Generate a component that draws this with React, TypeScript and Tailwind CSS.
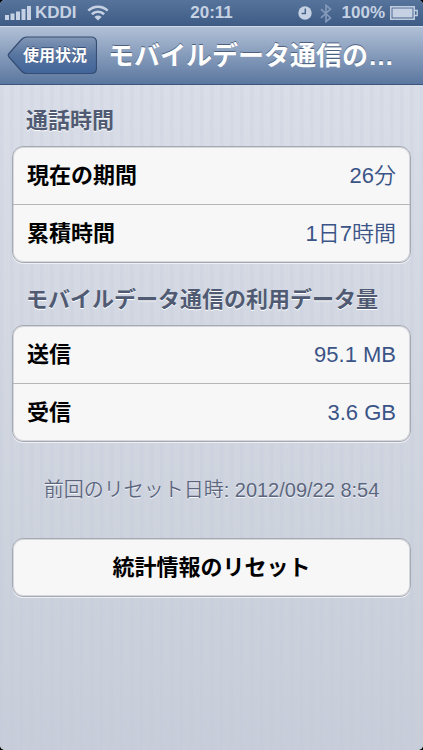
import React from 'react';

const callTime = [
  { label: '現在の期間', value: '26分' },
  { label: '累積時間', value: '1日7時間' },
];

const dataUsage = [
  { label: '送信', value: '95.1 MB' },
  { label: '受信', value: '3.6 GB' },
];

const StatusBar = () => {
  return (
    <div className="grid h-[26px] grid-cols-[1fr_auto_1fr] items-center bg-gradient-to-b from-[#56749b] to-[#3e5b85] px-[5px] text-[17px] leading-5 font-bold text-[#c6d2e3]">
      <div className="flex items-center gap-1">
        <svg width="26" height="14" viewBox="0 0 26 14" fill="currentColor" aria-hidden="true">
          <rect x="0" y="9" width="4" height="5" />
          <rect x="5.5" y="7.5" width="4" height="6.5" />
          <rect x="11" y="5.5" width="4" height="8.5" />
          <rect x="16.5" y="3" width="4" height="11" />
          <rect x="22" y="0" width="4" height="14" />
        </svg>
        <span>KDDI</span>
        <svg className="ml-1.5" width="22" height="16" viewBox="0 0 22 16" fill="none" stroke="currentColor" aria-hidden="true">
          <path d="M1.3 5.6a14 14 0 0 1 19.4 0" strokeWidth="2.6" />
          <path d="M4.9 9.2a8.8 8.8 0 0 1 12.2 0" strokeWidth="2.6" />
          <path d="M11 15.6 7.4 12a5.2 5.2 0 0 1 7.2 0z" fill="currentColor" stroke="none" />
        </svg>
      </div>
      <span>20:11</span>
      <div className="flex items-center justify-end">
        <svg width="14" height="14" viewBox="0 0 14 14" aria-hidden="true">
          <circle cx="7" cy="7" r="6.7" fill="currentColor" />
          <path d="M7.3 2.5v5H3.6" fill="none" stroke="#48658e" strokeWidth="1.5" />
        </svg>
        <svg className="ml-2 text-[#8299b9]" width="12" height="19" viewBox="0 0 12 19" fill="none" stroke="currentColor" strokeWidth="1.7" aria-hidden="true">
          <path d="M1 5.2 10.5 14 6 17.6V1.4L10.5 5 1 13.8" />
        </svg>
        <span className="ml-[10px]">100%</span>
        <svg className="ml-[5px]" width="28" height="14" viewBox="0 0 28 14" aria-hidden="true">
          <rect x="0.8" y="0.8" width="23.4" height="12.4" fill="none" stroke="currentColor" strokeWidth="1.5" />
          <rect x="2.5" y="2.5" width="20" height="9" fill="currentColor" />
          <path d="M24.5 4.5h2.7v5h-2.7" fill="none" stroke="currentColor" strokeWidth="1.3" />
        </svg>
      </div>
    </div>
  );
};

const NavBar = () => {
  return (
    <header className="flex h-[59px] items-center border-t border-b border-t-[#cfd9e7] border-b-[#3c557c] bg-gradient-to-b from-[#b1c0d6] to-[#5b779f] pr-3 pl-[7px]">
      <button type="button" className="relative h-[39px] w-[90px] shrink-0 pl-4 text-left text-[16px] leading-5 font-bold text-white">
        <svg className="absolute inset-0" width="90" height="39" viewBox="0 0 90 39" aria-hidden="true">
          <defs>
            <linearGradient id="back" x1="0" y1="0" x2="0" y2="1">
              <stop offset="0" stopColor="#8397b7" />
              <stop offset="0.5" stopColor="#56749f" />
              <stop offset="1" stopColor="#41659a" />
            </linearGradient>
          </defs>
          <path
            d="M20 1H84Q89.500 1 89.500 6.500V32Q89.500 37.500 84 37.500H20Q16.500 37.500 14 34.500L2 21Q0.500 19.300 2 17.500L14 4Q16.500 1 20 1Z"
            fill="url(#back)"
            stroke="#364d73"
            strokeWidth="1.2"
          />
        </svg>
        <span className="relative [text-shadow:0_-1px_0_#3a5077]">使用状況</span>
      </button>
      <h1 className="ml-[11px] min-w-0 flex-1 overflow-hidden text-[26px] leading-10 font-bold whitespace-nowrap text-white [text-shadow:0_-1px_0_#4d607e]">
        モバイルデータ通信の…
      </h1>
    </header>
  );
};

const Group = ({ title, rows }: { title: string; rows: { label: string; value: string }[] }) => {
  return (
    <section>
      <h2 className="px-[14px] text-[22px] leading-8 font-bold text-[#505b73] [text-shadow:0_1px_0_#ffffff]">
        {title}
      </h2>
      <dl className="mt-[9px] rounded-[11px] border border-[#a5a9b2] bg-[#f7f7f7] shadow-[inset_0_0_0_1px_#d5d7dc,0_1px_0_#eef0f5]">
        {rows.map((row) => (
          <div
            key={row.label}
            className="flex h-[57px] items-center justify-between px-[14px] text-[22px] leading-8 not-last:h-[58px] not-last:border-b not-last:border-[#b4b6ba]"
          >
            <dt className="font-bold text-black">{row.label}</dt>
            <dd className="font-[350] text-[#3b5487]">{row.value}</dd>
          </div>
        ))}
      </dl>
    </section>
  );
};

const App = () => {
  return (
    <div className="min-h-screen bg-black font-['Liberation_Sans','Noto_Sans_CJK_JP',sans-serif]" lang="ja">
      <div className="flex min-h-screen flex-col overflow-hidden rounded-[5px] bg-[#cdd2dc]">
        <StatusBar />
        <NavBar />
        <main className="flex flex-1 flex-col bg-[repeating-linear-gradient(90deg,#b9c2d826_0px,#b9c2d826_3px,transparent_4px,transparent_10px),linear-gradient(#d9dde7,#c8ced9)] px-3 pt-5">
          <Group title="通話時間" rows={callTime} />
          <div className="h-[21px]" />
          <Group title="モバイルデータ通信の利用データ量" rows={dataUsage} />
          <p className="mt-8 text-center text-[20px] leading-8 font-[350] text-[#5c667e] [text-shadow:0_1px_0_#f4f6fa]">
            前回のリセット日時: 2012/09/22 8:54
          </p>
          <button
            type="button"
            className="mt-8 h-[59px] rounded-[11px] border border-[#a5a9b2] bg-[#f7f7f7] text-[22px] leading-8 font-bold text-black shadow-[inset_0_0_0_1px_#d5d7dc,0_1px_0_#eef0f5]"
          >
            統計情報のリセット
          </button>
        </main>
      </div>
    </div>
  );
};

export default App;
